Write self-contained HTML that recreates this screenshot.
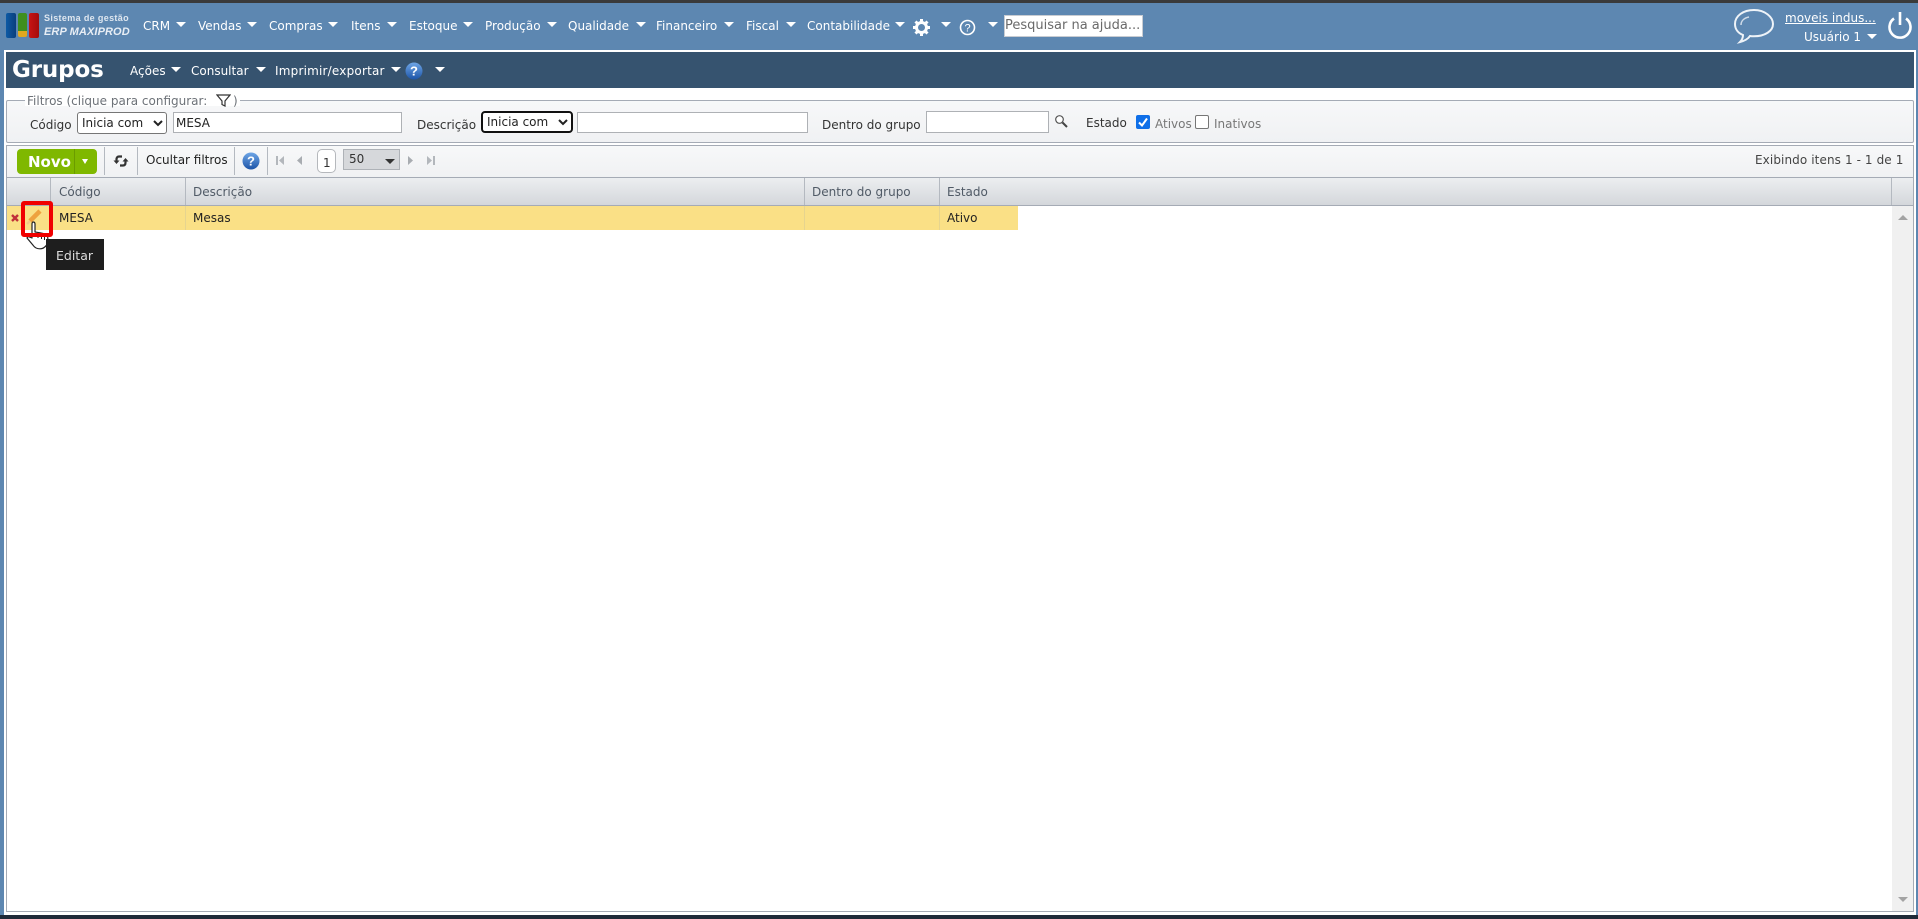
<!DOCTYPE html>
<html lang="pt-BR">
<head>
<meta charset="utf-8">
<title>Grupos</title>
<style>
html,body{margin:0;padding:0;width:1918px;height:919px;overflow:hidden;background:#fff;}
body{position:relative;font-family:"DejaVu Sans","Liberation Sans",sans-serif;font-size:12px;color:#333;}
.a{position:absolute;}
.t{position:absolute;white-space:nowrap;line-height:16px;height:16px;}
.m{color:#fff;font-size:12px;}
.c{position:absolute;width:0;height:0;border-left:5px solid transparent;border-right:5px solid transparent;border-top:5px solid #fff;}
.sep{position:absolute;width:1px;background:#b4b9c0;}
select.s{position:absolute;font-family:"DejaVu Sans","Liberation Sans",sans-serif;font-size:12px;background:#fff;color:#222;margin:0;padding:0;box-sizing:border-box;border:1px solid #767676;border-radius:3px;}
input.i{position:absolute;box-sizing:border-box;border:1px solid #aeb1b5;background:#fff;margin:0;padding:0 2px;font-family:"DejaVu Sans","Liberation Sans",sans-serif;font-size:12px;color:#222;}
.h{color:#505a66;}
.tri{position:absolute;width:0;height:0;}
</style>
</head>
<body>
<!-- Outer frame -->
<div class="a" style="left:0;top:0;width:1918px;height:3px;background:#3a3a3a"></div>
<div class="a" style="left:0;top:3px;width:1918px;height:47px;background:#5d87b1"></div>
<div class="a" style="left:0;top:50px;width:4px;height:865px;background:#5d87b1"></div>
<div class="a" style="left:1916px;top:50px;width:2px;height:865px;background:#5d87b1"></div>
<div class="a" style="left:0;top:915px;width:1918px;height:4px;background:#1f2a38"></div>

<!-- Logo -->
<div class="a" style="left:6px;top:13px;width:10px;height:25px;border-radius:2px;background:linear-gradient(90deg,#0d5aa5,#0a3f7c)"></div>
<div class="a" style="left:18px;top:13px;width:9px;height:18px;border-radius:2px 2px 0 0;background:#3f8f1e"></div>
<div class="a" style="left:18px;top:31px;width:9px;height:6px;border-radius:0 0 2px 2px;background:#e0a820"></div>
<div class="a" style="left:29px;top:13px;width:10px;height:25px;border-radius:2px;background:linear-gradient(90deg,#c81414,#a40c0c)"></div>
<div class="t" style="left:44px;top:10px;font-size:9px;font-weight:bold;color:#dfe7f0;font-family:'Liberation Sans',sans-serif;letter-spacing:.35px">Sistema de gestão</div>
<div class="t" style="left:44px;top:24px;font-size:11px;font-weight:bold;font-style:italic;color:#e8eef5;font-family:'Liberation Sans',sans-serif;letter-spacing:.1px">ERP MAXIPROD</div>

<!-- Main menu -->
<div class="t m" style="left:143px;top:18px">CRM</div><div class="c" style="left:176px;top:22px"></div>
<div class="t m" style="left:198px;top:18px">Vendas</div><div class="c" style="left:247px;top:22px"></div>
<div class="t m" style="left:269px;top:18px">Compras</div><div class="c" style="left:328px;top:22px"></div>
<div class="t m" style="left:351px;top:18px">Itens</div><div class="c" style="left:387px;top:22px"></div>
<div class="t m" style="left:409px;top:18px">Estoque</div><div class="c" style="left:463px;top:22px"></div>
<div class="t m" style="left:485px;top:18px">Produção</div><div class="c" style="left:547px;top:22px"></div>
<div class="t m" style="left:568px;top:18px">Qualidade</div><div class="c" style="left:636px;top:22px"></div>
<div class="t m" style="left:656px;top:18px">Financeiro</div><div class="c" style="left:724px;top:22px"></div>
<div class="t m" style="left:746px;top:18px">Fiscal</div><div class="c" style="left:786px;top:22px"></div>
<div class="t m" style="left:807px;top:18px">Contabilidade</div><div class="c" style="left:895px;top:22px"></div>
<svg class="a" style="left:912px;top:18px" width="19" height="19" viewBox="0 0 19 19"><g stroke="#fff" stroke-width="3" fill="none"><circle cx="9.5" cy="9.5" r="5"/></g><g stroke="#fff" stroke-width="3"><path d="M9.5 1v3M9.5 15v3M1 9.5h3M15 9.5h3M3.5 3.5l2 2M13.5 13.5l2 2M3.5 15.500l2-2M13.500 5.500l2-2"/></g></svg>
<div class="c" style="left:941px;top:22px"></div>
<svg class="a" style="left:959px;top:19px" width="17" height="17" viewBox="0 0 17 17"><circle cx="8.500" cy="8.500" r="7" fill="none" stroke="#fff" stroke-width="1.600"/><text x="8.500" y="12.500" font-size="11" fill="#fff" text-anchor="middle" font-family="Liberation Sans, sans-serif">?</text></svg>
<div class="c" style="left:988px;top:22px"></div>
<div class="a" style="left:1004px;top:15px;width:139px;height:22px;box-sizing:border-box;background:#fff;border:1px solid #c8ccd2"></div>
<div class="t" style="left:1005px;top:18px;color:#6a6a6a;font-size:13px">Pesquisar na ajuda...</div>

<!-- Right user block -->
<svg class="a" style="left:1732px;top:7px" width="44" height="40" viewBox="0 0 44 40"><path d="M22 3C11 3 3 9 3 17c0 5 3 9 8 11 0 2-1 5-3 7 4-1 8-3 10-6 1 .2 3 .3 4 .3 11 0 19-5.300 19-12.300S33 3 22 3z" fill="none" stroke="#eef3f8" stroke-width="2"/><path d="M9 18c0-4 3-7 8-8" fill="none" stroke="#cfdbe8" stroke-width="1.500"/></svg>
<div class="t" style="left:1785px;top:10px;color:#fff;text-decoration:underline;font-size:12px">moveis indus...</div>
<div class="t" style="left:1804px;top:29px;color:#fff;font-size:12px">Usuário 1</div>
<div class="c" style="left:1867px;top:34px"></div>
<svg class="a" style="left:1888px;top:10px" width="24" height="29" viewBox="0 0 24 29"><path d="M6 8.500A10.500 10.500 0 1 0 18 8.500" fill="none" stroke="#fff" stroke-width="2.600"/><path d="M12 2v13" stroke="#fff" stroke-width="2.600" fill="none"/></svg>

<!-- Title bar -->
<div class="a" style="left:4px;top:50px;width:1912px;height:2px;background:#fff"></div>
<div class="a" style="left:6px;top:52px;width:1908px;height:36px;background:#36536f"></div>
<div class="t" style="left:12px;top:55px;height:30px;line-height:30px;font-size:23px;font-weight:bold;color:#fff;letter-spacing:-.15px">Grupos</div>
<div class="t m" style="left:130px;top:63px">Ações</div><div class="c" style="left:171px;top:67px"></div>
<div class="t m" style="left:191px;top:63px">Consultar</div><div class="c" style="left:256px;top:67px"></div>
<div class="t m" style="left:275px;top:63px;letter-spacing:.2px">Imprimir/exportar</div><div class="c" style="left:391px;top:67px"></div>
<svg class="a" style="left:405px;top:62px" width="18" height="18" viewBox="0 0 18 18"><defs><linearGradient id="q1" x1="0" y1="0" x2="0" y2="1"><stop offset="0" stop-color="#6fa6e6"/><stop offset="1" stop-color="#1d55a8"/></linearGradient></defs><circle cx="9" cy="9" r="8.500" fill="url(#q1)"/><text x="9" y="13.500" font-size="13" font-weight="bold" fill="#fff" text-anchor="middle" font-family="Liberation Sans, sans-serif">?</text></svg>
<div class="c" style="left:435px;top:67px"></div>

<!-- Filters -->
<div class="a" style="left:6px;top:100px;width:1908px;height:43px;box-sizing:border-box;border:1px solid #a5abb5;border-radius:2px;background:linear-gradient(#f7f8f9,#f0f1f3)"></div>
<div class="a" style="left:25px;top:94px;width:215px;height:12px;background:#fff"></div>
<div class="t" style="left:27px;top:93px;color:#6d7278;font-size:12px">Filtros (clique para configurar:</div>
<svg class="a" style="left:216px;top:93px" width="15" height="15" viewBox="0 0 15 15"><path d="M1 2h13L9 8v5l-3-1.500V8z" fill="none" stroke="#333" stroke-width="1.200"/></svg>
<div class="t" style="left:233px;top:93px;color:#6d7278">)</div>

<div class="t" style="left:30px;top:117px;color:#333">Código</div>
<select class="s" style="left:77px;top:112px;width:90px;height:22px"><option>Inicia com</option></select>
<input class="i" style="left:173px;top:112px;width:229px;height:21px" value="MESA">
<div class="t" style="left:417px;top:117px;color:#333">Descrição</div>
<select class="s" style="left:481px;top:111px;width:92px;height:22px;border:2px solid #111;border-radius:4px"><option>Inicia com</option></select>
<input class="i" style="left:577px;top:112px;width:231px;height:21px">
<div class="t" style="left:822px;top:117px;color:#333">Dentro do grupo</div>
<input class="i" style="left:926px;top:111px;width:123px;height:22px">
<svg class="a" style="left:1054px;top:114px" width="15" height="15" viewBox="0 0 15 15"><circle cx="5.500" cy="5.500" r="3.800" fill="#fff" stroke="#555" stroke-width="1.200"/><path d="M8.500 8.500l4.500 4.500" stroke="#444" stroke-width="2"/></svg>
<div class="t" style="left:1086px;top:115px;color:#333">Estado</div>
<div class="a" style="left:1136px;top:115px;width:14px;height:14px;border-radius:2px;background:#0f6fe8"></div>
<svg class="a" style="left:1136px;top:115px" width="14" height="14" viewBox="0 0 14 14"><path d="M3 7.500l3 3 5-7" fill="none" stroke="#fff" stroke-width="2"/></svg>
<div class="t" style="left:1155px;top:116px;color:#777">Ativos</div>
<div class="a" style="left:1195px;top:115px;width:14px;height:14px;box-sizing:border-box;border:1px solid #767676;border-radius:2px;background:#fff"></div>
<div class="t" style="left:1214px;top:116px;color:#777">Inativos</div>

<!-- Toolbar -->
<div class="a" style="left:6px;top:145px;width:1908px;height:33px;box-sizing:border-box;border:1px solid #a5abb5;border-bottom:0;background:linear-gradient(#f7f8f9,#f0f1f3)"></div>
<div class="a" style="left:17px;top:149px;width:80px;height:25px;border-radius:4px;background:#7fb800"></div>
<div class="a" style="left:74px;top:149px;width:1px;height:25px;background:#6b9c00"></div>
<div class="t" style="left:28px;top:154px;font-size:15px;font-weight:bold;color:#fff">Novo</div>
<div class="tri" style="left:82px;top:159px;border-left:3.500px solid transparent;border-right:3.500px solid transparent;border-top:5px solid #fff"></div>
<div class="sep" style="left:104px;top:147px;height:28px"></div>
<svg class="a" style="left:113px;top:154px" width="16" height="14" viewBox="0 0 16 14"><path d="M9 2.500H6C4.500 2.500 3.500 3.500 3.500 5.500V7" fill="none" stroke="#333" stroke-width="2.200"/><path d="M.5 6.500h6L3.500 10z" fill="#333"/><path d="M7 11.500h3c1.500 0 2.500-1 2.500-3V7" fill="none" stroke="#333" stroke-width="2.200"/><path d="M9.500 7.500h6L12.500 4z" fill="#333"/></svg>
<div class="sep" style="left:137px;top:147px;height:28px"></div>
<div class="t" style="left:146px;top:152px;color:#222">Ocultar filtros</div>
<div class="sep" style="left:234px;top:147px;height:28px"></div>
<svg class="a" style="left:242px;top:152px" width="18" height="18" viewBox="0 0 18 18"><defs><linearGradient id="q2" x1="0" y1="0" x2="0" y2="1"><stop offset="0" stop-color="#6fa6e6"/><stop offset="1" stop-color="#1d55a8"/></linearGradient></defs><circle cx="9" cy="9" r="8.500" fill="url(#q2)"/><text x="9" y="13.500" font-size="13" font-weight="bold" fill="#fff" text-anchor="middle" font-family="Liberation Sans, sans-serif">?</text></svg>
<div class="sep" style="left:267px;top:147px;height:28px"></div>
<svg class="a" style="left:275px;top:155px" width="10" height="11" viewBox="0 0 10 11"><path d="M1 1h2v9H1zM9 1v9L4 5.500z" fill="#b3b7bc"/></svg>
<svg class="a" style="left:295px;top:155px" width="8" height="11" viewBox="0 0 8 11"><path d="M7 1v9L2 5.500z" fill="#a8acb1"/></svg>
<div class="a" style="left:317px;top:149px;width:19px;height:24px;box-sizing:border-box;border:1px solid #b5b8bc;border-radius:5px;background:#fff"></div>
<div class="t" style="left:323px;top:155px;color:#333">1</div>
<div class="a" style="left:343px;top:149px;width:57px;height:21px;box-sizing:border-box;border:1px solid #aeb2b7;background:#d6d8db"></div>
<div class="t" style="left:349px;top:151px;color:#333">50</div>
<div class="tri" style="left:385px;top:159px;border-left:5px solid transparent;border-right:5px solid transparent;border-top:5px solid #333"></div>
<svg class="a" style="left:407px;top:155px" width="8" height="11" viewBox="0 0 8 11"><path d="M1 1v9l5-4.500z" fill="#a8acb1"/></svg>
<svg class="a" style="left:426px;top:155px" width="10" height="11" viewBox="0 0 10 11"><path d="M1 1v9l5-4.500zM7 1h2v9H7z" fill="#b3b7bc"/></svg>
<div class="t" style="left:1755px;top:152px;color:#444;letter-spacing:.1px">Exibindo itens 1 - 1 de 1</div>

<!-- Grid -->
<div class="a" style="left:6px;top:177px;width:1908px;height:735px;box-sizing:border-box;border:1px solid #a5abb5;background:#fff"></div>
<div class="a" style="left:7px;top:178px;width:1906px;height:27px;background:linear-gradient(#eceef0,#d4d7db)"></div>
<div class="a" style="left:7px;top:205px;width:1906px;height:1px;background:#a5abb5"></div>
<div class="sep" style="left:50px;top:178px;height:27px"></div>
<div class="sep" style="left:185px;top:178px;height:27px"></div>
<div class="sep" style="left:804px;top:178px;height:27px"></div>
<div class="sep" style="left:939px;top:178px;height:27px"></div>
<div class="sep" style="left:1891px;top:178px;height:27px"></div>
<div class="t h" style="left:59px;top:184px">Código</div>
<div class="t h" style="left:193px;top:184px">Descrição</div>
<div class="t h" style="left:812px;top:184px">Dentro do grupo</div>
<div class="t h" style="left:947px;top:184px">Estado</div>

<div class="a" style="left:7px;top:206px;width:1011px;height:24px;background:#fae086"></div>
<div class="a" style="left:185px;top:206px;width:1px;height:24px;background:#e6d48f"></div>
<div class="a" style="left:804px;top:206px;width:1px;height:24px;background:#e6d48f"></div>
<div class="a" style="left:939px;top:206px;width:1px;height:24px;background:#e6d48f"></div>
<div class="t" style="left:59px;top:210px;color:#222">MESA</div>
<div class="t" style="left:193px;top:210px;color:#222">Mesas</div>
<div class="t" style="left:947px;top:210px;color:#222">Ativo</div>

<svg class="a" style="left:11px;top:214px" width="8" height="8" viewBox="0 0 8 8"><path d="M1 1l6 6M7 1L1 7" stroke="#c0303a" stroke-width="2.400"/></svg>
<svg class="a" style="left:25px;top:208px" width="18" height="18" viewBox="0 0 18 18"><path d="M5 13L15 3" stroke="#eea23e" stroke-width="4.500"/><path d="M2 16l3-3" stroke="#f3c98a" stroke-width="2.500"/></svg>
<svg class="a" style="left:26px;top:220px" width="26" height="32" viewBox="0 0 26 32"><path d="M7 2c1.500 0 2 1 2 2v8l2 .3 2.500.4 3 .6 3.500 1 1.500 .5.500 6c0 3-3 8-8 8-3 0-5-1-6.500-3L1 18l1-1.500 4 1.500V4c0-1 .5-2 1-2z" fill="#fff" stroke="#222" stroke-width="1.200" stroke-linejoin="round"/><path d="M12 13v5M15.500 14v5M18.500 15v5" stroke="#222" stroke-width="1"/></svg>
<div class="a" style="left:21px;top:201px;width:32px;height:36px;box-sizing:border-box;border:4px solid #f00000;border-radius:3px"></div>
<div class="a" style="left:46px;top:239px;width:58px;height:31px;background:#1e1e1e"></div>
<div class="t" style="left:56px;top:248px;color:#ddd;font-size:12.500px">Editar</div>

<!-- Scrollbar -->
<div class="a" style="left:1892px;top:206px;width:21px;height:705px;background:#f0f0f0"></div>
<div class="tri" style="left:1898px;top:215px;border-left:5px solid transparent;border-right:5px solid transparent;border-bottom:5px solid #a3a3a3"></div>
<div class="tri" style="left:1898px;top:897px;border-left:5px solid transparent;border-right:5px solid transparent;border-top:5px solid #a3a3a3"></div>
</body>
</html>
